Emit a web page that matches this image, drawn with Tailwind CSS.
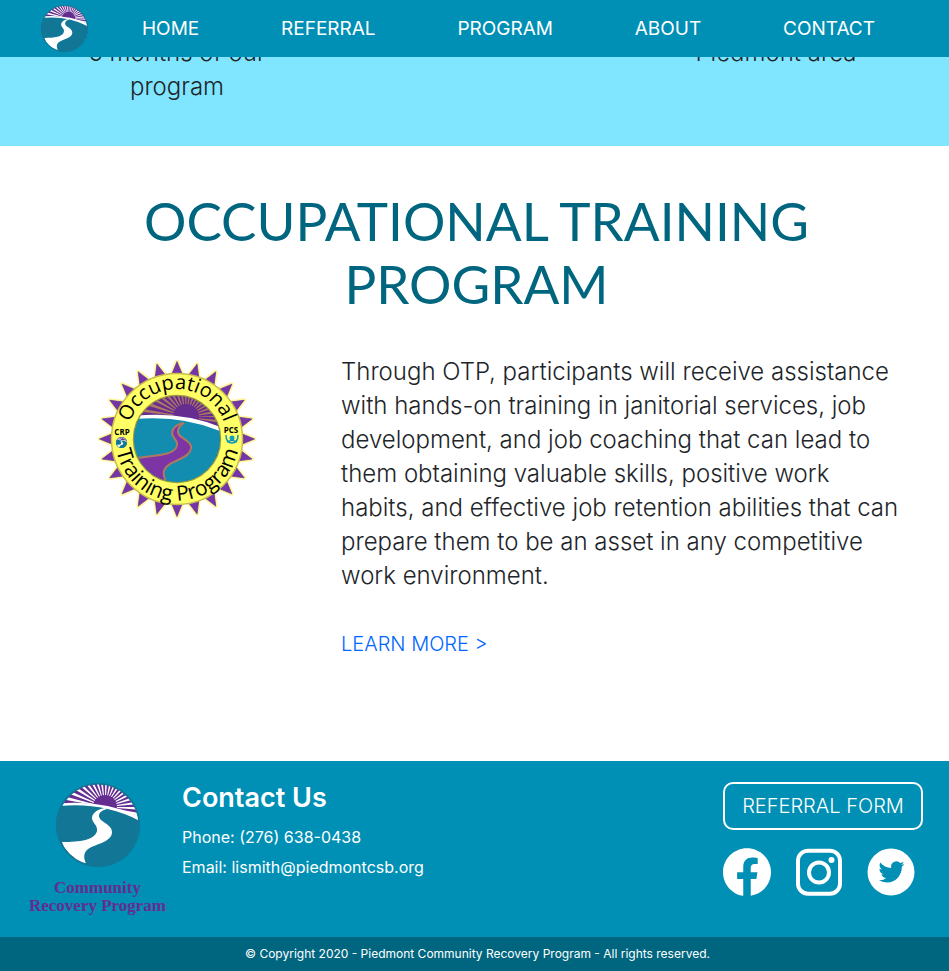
<!DOCTYPE html>
<html lang="en">
<head>
<meta charset="utf-8">
<meta name="viewport" content="width=device-width, initial-scale=1">
<title>Piedmont Community Recovery Program</title>
<script src="https://cdn.jsdelivr.net/npm/@tailwindcss/browser@4"></script>
</head>
<body class="bg-white font-['Inter',sans-serif] text-[#212529]">

<!-- Shared logo artwork -->
<svg class="absolute size-0" aria-hidden="true">
  <defs>
    <clipPath id="disc"><circle cx="42" cy="42" r="41"/></clipPath>
    <symbol id="logo" viewBox="0 0 84 84">
      <circle cx="42" cy="42" r="42" fill="#127796"/>
      <g clip-path="url(#disc)">
        <path d="M0 0H84V38Q42 20 0 24Z" fill="#652d90"/>
        <circle cx="49" cy="24" r="29" fill="none" stroke="#fff" stroke-width="40" stroke-dasharray="2.300 2.760"/>
        <circle cx="49" cy="24" r="12" fill="#652d90"/>
        <path d="M0 22Q46 15 84 38V84H0Z" fill="#127796"/>
        <path d="M4 20.500Q46 17 83 33L82 37Q46 19 4 23Z" fill="#fff"/>
        <path d="M49 25C42 26 36 30 36 35C36 40 42 42 41 48C39 57 24 59 6 59C8 65 11 70 16 74C20 77 25 80 30 80.500C28 76 27 71 31 67C37 61 56 60 56 49C56 41 43 39 43 33C43 29 47 27 51 26Z" fill="#fff"/>
      </g>
      <circle cx="42" cy="42" r="41.200" fill="none" stroke="#127796" stroke-width="1.600"/>
    </symbol>
  </defs>
</svg>

<header class="fixed inset-x-0 top-0 z-10 flex h-[57px] items-center bg-[#008fb5] pr-[74px] pl-[41px]">
  <a href="#" aria-label="Community Recovery Program home" class="mr-[54px] shrink-0">
    <svg class="size-[47px]" aria-hidden="true"><use href="#logo"/></svg>
  </a>
  <nav class="flex grow justify-between text-[19px] leading-7 text-white">
    <a href="#">HOME</a>
    <a href="#">REFERRAL</a>
    <a href="#">PROGRAM</a>
    <a href="#">ABOUT</a>
    <a href="#">CONTACT</a>
  </nav>
</header>

<main>
  <section class="flex justify-between bg-[#80e6ff] px-[76px] pt-[36px] pb-[42px] text-center text-[24px] leading-[34px] font-light">
    <p class="w-[202px]">6 months of our<br>program</p>
    <p class="w-[194px]">Piedmont area</p>
  </section>

  <section class="px-8 pt-[43px] pb-[103px]">
    <h1 class="pl-1 text-center font-['Lato',sans-serif] text-[53px] leading-[63px] font-normal text-[#006680]">OCCUPATIONAL TRAINING<br>PROGRAM</h1>
    <div class="mt-[34px] flex">
      <div class="w-[309px] shrink-0 pl-[58px]">
        <svg class="h-[175px] w-[175px]" viewBox="0 0 175 175" role="img" aria-label="Occupational Training Program seal">
          <defs>
            <clipPath id="seal"><circle cx="87" cy="90" r="43"/></clipPath>
            <path id="spike" d="M87 12.500L93 27H81Z"/>
            <g id="spikes">
              <use href="#spike"/>
              <use href="#spike" transform="rotate(15 87 90)"/>
              <use href="#spike" transform="rotate(30 87 90)"/>
              <use href="#spike" transform="rotate(45 87 90)"/>
              <use href="#spike" transform="rotate(60 87 90)"/>
              <use href="#spike" transform="rotate(75 87 90)"/>
            </g>
            <g id="ring">
              <use href="#spikes"/>
              <use href="#spikes" transform="rotate(90 87 90)"/>
              <use href="#spikes" transform="rotate(180 87 90)"/>
              <use href="#spikes" transform="rotate(270 87 90)"/>
            </g>
            <path id="arc-top" d="M37 90A50 50 0 0 1 137 90"/>
            <path id="arc-bottom" d="M26.300 79A61.700 61.700 0 1 0 147.700 79"/>
          </defs>
          <use href="#ring" fill="#fff27a" stroke="#fff6a0" stroke-width="4" stroke-linejoin="round"/>
          <use href="#ring" fill="#7535a8" stroke="#5a2c88" stroke-width="0.600"/>
          <circle cx="87" cy="90" r="65.500" fill="#ffff66" stroke="#c9be4c" stroke-width="1.500"/>
          <circle cx="87" cy="90" r="43.500" fill="#128caf" stroke="#9c9a38" stroke-width="1.500"/>
          <g clip-path="url(#seal)">
            <path d="M40 40H135V84Q85 60 40 70Z" fill="#b07860"/>
            <circle cx="96" cy="68" r="25" fill="none" stroke="#652d90" stroke-width="50" stroke-dasharray="2.500 1.860"/>
            <circle cx="96" cy="68" r="13" fill="#652d90"/>
            <path d="M40 69Q92 60 135 84V140H40Z" fill="#128caf"/>
            <path d="M40 67.500Q92 61 135 80V84Q92 65 40 70.500Z" fill="#fff"/>
            <path d="M94 74C86 75 80 81 83 87C85 91 89 93 86 99C80 107 65 106 47 109C52 121 62 129 76 133C71 122 74 117 86 112C95 108 102 104 101 97C99 90 87 89 88 82C88 78 91 76 94 74Z" fill="#7d35a5" stroke="#b07860" stroke-width="2"/>
          </g>
          <g fill="#000" font-family="Open Sans, sans-serif" text-anchor="middle">
            <text font-size="20" font-weight="500"><textPath href="#arc-top" startOffset="50%">Occupational</textPath></text>
            <text font-size="21" font-weight="500"><textPath href="#arc-bottom" startOffset="50%">Training Program</textPath></text>
            <text x="32" y="86" font-size="8" font-weight="700">CRP</text>
            <text x="141" y="84" font-size="8" font-weight="700">PCS</text>
          </g>
          <svg x="26" y="88" width="11" height="11"><use href="#logo"/></svg>
          <circle cx="142" cy="89" r="2.500" fill="#12a0bd"/>
          <path d="M136 86Q136 94 142 94T148 86M137 93Q142 90 147 93" fill="none" stroke="#1496b8" stroke-width="1.500"/>
        </svg>
      </div>
      <div class="grow">
        <p class="mt-[6px] text-[24px] leading-[34px] font-light">Through OTP, participants will receive assistance<br>with hands-on training in janitorial services, job<br>development, and job coaching that can lead to<br>them obtaining valuable skills, positive work<br>habits, and effective job retention abilities that can<br>prepare them to be an asset in any competitive<br>work environment.</p>
        <a href="#" class="mt-[37px] inline-block text-[20px] leading-7 font-light text-[#0066ff]">LEARN MORE &gt;</a>
      </div>
    </div>
  </section>
</main>

<footer class="bg-[#008fb5] text-white">
  <div class="flex min-h-[176px] pt-[21px] pr-[26px] pl-[27px]">
    <div class="flex w-[141px] shrink-0 flex-col items-center">
      <svg class="mt-px size-[84px]" aria-hidden="true"><use href="#logo"/></svg>
      <p class="mt-3 text-center font-['Liberation_Serif',serif] text-[17px] leading-[18px] font-bold whitespace-nowrap text-[#652d90]">Community<br>Recovery Program</p>
    </div>
    <div class="ml-[14px] grow">
      <h2 class="text-[27px] leading-[32px] font-semibold">Contact Us</h2>
      <p class="mt-2 text-[16px] leading-[30px]">Phone: (276) 638-0438</p>
      <p class="text-[16px] leading-[30px]">Email: lismith@piedmontcsb.org</p>
    </div>
    <div class="w-[200px] shrink-0">
      <a href="#" class="flex h-[48px] items-center justify-center rounded-[10px] border-2 border-white text-[20px] font-light whitespace-nowrap">REFERRAL FORM</a>
      <div class="mt-[18px] flex justify-between pr-2">
        <a href="#" aria-label="Facebook">
          <svg class="size-[48px]" viewBox="0 0 24 24" fill="#fff"><path d="M24 12.073c0-6.627-5.373-12-12-12s-12 5.373-12 12c0 5.990 4.388 10.954 10.125 11.854v-8.385H7.078v-3.470h3.047V9.430c0-3.007 1.792-4.669 4.533-4.669 1.312 0 2.686.235 2.686.235v2.953H15.830c-1.491 0-1.956.925-1.956 1.874v2.250h3.328l-.532 3.470h-2.796v8.385C19.612 23.027 24 18.062 24 12.073z"/></svg>
        </a>
        <a href="#" aria-label="Instagram">
          <svg class="size-[48px]" viewBox="0 0 48 48" fill="none" stroke="#fff" stroke-width="4"><rect x="3" y="2.700" width="42" height="43" rx="10"/><circle cx="24" cy="24.500" r="10"/><circle cx="36.500" cy="12" r="3" fill="#fff" stroke="none"/></svg>
        </a>
        <a href="#" aria-label="Twitter">
          <svg class="size-[48px]" viewBox="0 0 48 48"><circle cx="24" cy="24" r="23.500" fill="#fff"/><path transform="translate(11.500 11) scale(1.080)" fill="#008fb5" d="M23.950 4.570a10 10 0 0 1-2.820.780 4.960 4.960 0 0 0 2.160-2.730c-.950.560-2 .960-3.130 1.190a4.920 4.920 0 0 0-8.380 4.480C7.690 8.100 4.070 6.130 1.640 3.160a4.930 4.930 0 0 0 1.520 6.570 4.900 4.900 0 0 1-2.230-.610v.060a4.920 4.920 0 0 0 3.950 4.830 5 5 0 0 1-2.210.080 4.940 4.940 0 0 0 4.600 3.420A9.870 9.870 0 0 1 0 19.540a13.990 13.990 0 0 0 7.550 2.210c9.050 0 14-7.500 14-13.980 0-.210 0-.420-.020-.630a9.940 9.940 0 0 0 2.420-2.570z"/></svg>
        </a>
      </div>
    </div>
  </div>
  <p class="bg-[#006680] pl-[6px] text-center text-[12px] leading-[34px]">© Copyright 2020 - Piedmont Community Recovery Program - All rights reserved.</p>
</footer>
</body>
</html>
